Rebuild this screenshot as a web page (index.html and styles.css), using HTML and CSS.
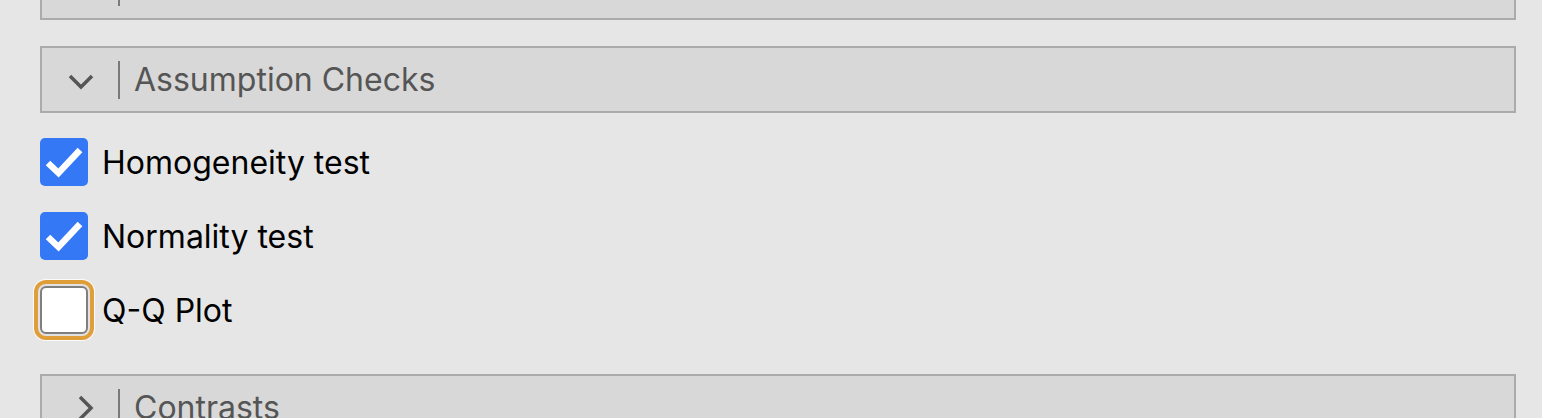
FILE: index.html
```html
<!DOCTYPE html>
<html>
<head>
<meta charset="utf-8">
<link rel="stylesheet" href="styles.css">
</head>
<body>
<div class="panel">
  <div class="section-header first">
    <div class="chev-area"><svg class="chev-right" width="16" height="26" viewBox="0 0 16 26"><polyline points="2,2 13,13 2,24" fill="none" stroke="#555" stroke-width="3.5"/></svg></div>
    <div class="divider"></div>
    <div class="title"></div>
  </div>

  <div class="section-header open">
    <div class="chev-area"><svg class="chev-down" width="26" height="16" viewBox="0 0 26 16"><polyline points="2,2 13,13 24,2" fill="none" stroke="#555" stroke-width="3.5"/></svg></div>
    <div class="divider"></div>
    <div class="title">Assumption Checks</div>
  </div>

  <div class="options">
    <label class="option">
      <span class="box checked"><svg width="48" height="48" viewBox="0 0 48 48"><polyline points="8,25 18.5,35 40,12" fill="none" stroke="#fff" stroke-width="6.5"/></svg></span>
      <span class="label">Homogeneity test</span>
    </label>
    <label class="option">
      <span class="box checked"><svg width="48" height="48" viewBox="0 0 48 48"><polyline points="8,25 18.5,35 40,12" fill="none" stroke="#fff" stroke-width="6.5"/></svg></span>
      <span class="label">Normality test</span>
    </label>
    <label class="option">
      <span class="box unchecked focused"></span>
      <span class="label">Q-Q Plot</span>
    </label>
  </div>

  <div class="section-header closed">
    <div class="chev-area"><svg class="chev-right" width="16" height="26" viewBox="0 0 16 26"><polyline points="2,2 13,13 2,24" fill="none" stroke="#555" stroke-width="3.5"/></svg></div>
    <div class="divider"></div>
    <div class="title">Contrasts</div>
  </div>
</div>
</body>
</html>
```

FILE: styles.css
```css
html, body {
  margin: 0;
  padding: 0;
  background: #e6e6e6;
  overflow: hidden;
  height: 418px;
}
.panel {
  padding: 0 26px 0 40px;
  font-family: Inter, "Noto Sans", sans-serif;
}
.section-header {
  height: 63px;
  border: 2px solid #ababab;
  background: #d8d8d8;
  display: flex;
  align-items: center;
}
.section-header.first {
  margin-top: -47px;
}
.section-header.open {
  margin-top: 26px;
}
.section-header.closed {
  margin-top: 40px;
}
.chev-area {
  width: 76px;
  height: 100%;
  display: flex;
  align-items: center;
}
.chev-down {
  margin-left: 26px;
  margin-top: 4px;
}
.chev-right {
  margin-left: 36px;
}
.divider {
  width: 2px;
  height: 38px;
  background: #7a7a7a;
}
.title {
  margin-left: 14px;
  font-size: 32px;
  color: #555;
  white-space: nowrap;
}
.options {
  margin-top: 25px;
  display: flex;
  flex-direction: column;
  gap: 26px;
}
.option {
  display: flex;
  align-items: center;
  height: 48px;
  gap: 14px;
}
.box {
  width: 48px;
  height: 48px;
  box-sizing: border-box;
  border-radius: 5px;
  flex: none;
}
.box svg {
  display: block;
}
.box.checked {
  background: #3478f6;
}
.box.unchecked {
  background: #fff;
  border: 2px solid #7f7f7f;
  border-radius: 6px;
}
.box.focused {
  box-shadow: 0 0 0 2px #e2e2e2, 0 0 0 6px #e09e3a, 0 0 0 7px #fbfbfb;
}
.label {
  font-size: 32px;
  color: #000;
  white-space: nowrap;
}
```
